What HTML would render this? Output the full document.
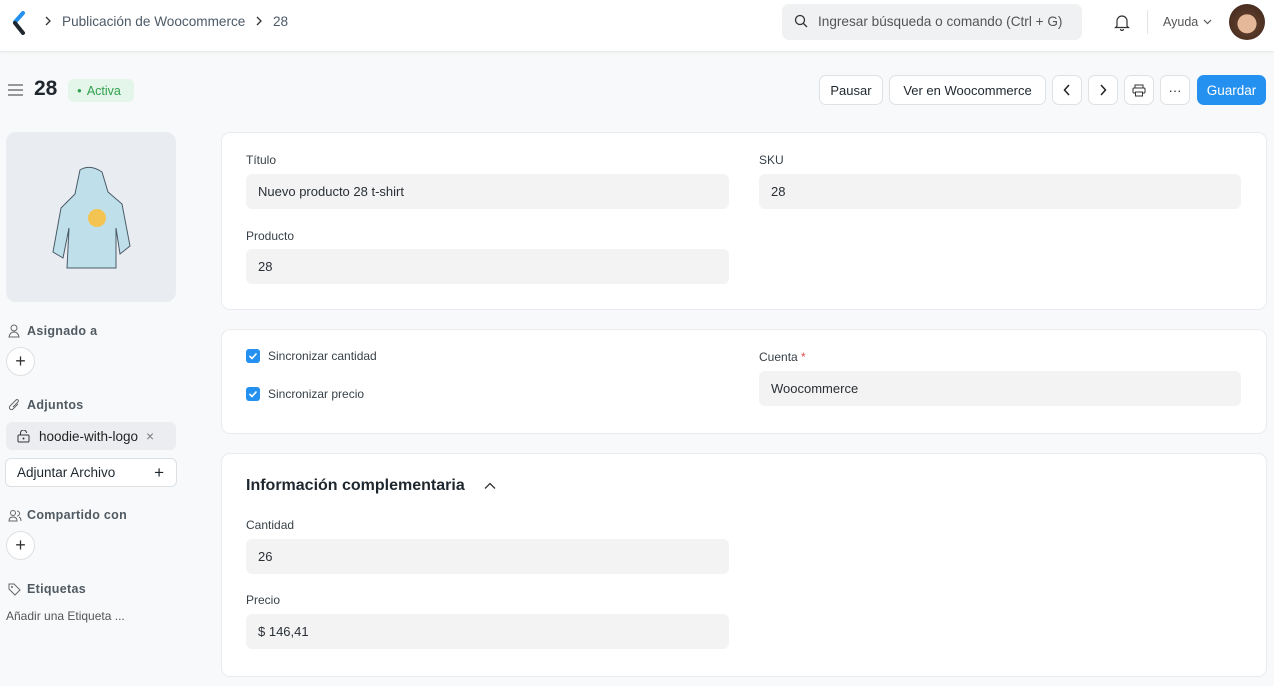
<!DOCTYPE html>
<html><head><meta charset="utf-8"><style>
*{box-sizing:border-box;margin:0;padding:0}
body{width:1274px;height:686px;overflow:hidden;background:#f8f9fa;font-family:"Liberation Sans",sans-serif;color:#1f272e;position:relative;font-size:13px}
.hdr{position:absolute;left:0;top:0;width:1274px;height:52px;background:#fff;border-bottom:1px solid #e8eaed;box-shadow:0 1px 3px rgba(0,0,0,.04)}
.abs{position:absolute}
.btn{position:absolute;top:75px;height:30px;border:1px solid #dfe2e5;border-radius:7px;background:#fff;font-size:13px;display:flex;align-items:center;justify-content:center;color:#1f272e}
.card{position:absolute;left:221px;width:1046px;background:#fff;border:1px solid #e9ebee;border-radius:9px}
.lbl{position:absolute;font-size:12px;color:#384148}
.inp{position:absolute;height:35px;background:#f3f3f4;border-radius:6px;font-size:13px;padding-left:12px;display:flex;align-items:center;color:#2a3036}
.side{position:absolute;left:27px;font-size:12.5px;color:#505a62;font-weight:bold;letter-spacing:.3px}
.circ{position:absolute;left:6px;width:29px;height:29px;border:1px solid #dde0e3;border-radius:50%;background:#fff;display:flex;align-items:center;justify-content:center;font-size:18px;color:#333}
.cb{position:absolute;left:246px;width:14px;height:14px;background:#2490ef;border-radius:3px}
</style></head><body>
<div class="hdr">
<svg class="abs" style="left:12px;top:11px" width="14" height="24" viewBox="0 0 14 24"><path d="M11 2L3 11" stroke="#2490ef" stroke-width="4" stroke-linecap="round"/><path d="M3 12L11 22" stroke="#1f272e" stroke-width="4" stroke-linecap="round"/></svg>
<svg class="abs" style="left:44px;top:16px" width="8" height="10"><path d="M2 1l4 4-4 4" fill="none" stroke="#333" stroke-width="1.3"/></svg>
<div class="abs" style="left:62px;top:14px;font-size:13.6px;color:#4c5a67">Publicación de Woocommerce</div>
<svg class="abs" style="left:255px;top:16px" width="8" height="10"><path d="M2 1l4 4-4 4" fill="none" stroke="#333" stroke-width="1.3"/></svg>
<div class="abs" style="left:273px;top:14px;font-size:13.6px;color:#4c5a67">28</div>
<div class="abs" style="left:782px;top:4px;width:300px;height:36px;background:#f0f1f2;border-radius:7px"></div>
<svg class="abs" style="left:794px;top:14px" width="14" height="14" viewBox="0 0 14 14"><circle cx="6" cy="6" r="4.5" fill="none" stroke="#333" stroke-width="1.3"/><path d="M9.5 9.5L13 13" stroke="#333" stroke-width="1.3"/></svg>
<div class="abs" style="left:818px;top:14px;font-size:13.6px;color:#555">Ingresar búsqueda o comando (Ctrl + G)</div>
<svg class="abs" style="left:1114px;top:13px" width="16" height="18" viewBox="0 0 16 18"><path d="M3 13V8a5 5 0 0110 0v5l1.5 1.5h-13z" fill="none" stroke="#333" stroke-width="1.2"/><path d="M6.5 16a1.5 1.5 0 003 0" fill="none" stroke="#333" stroke-width="1.2"/></svg>
<div class="abs" style="left:1147px;top:10px;width:1px;height:24px;background:#e2e4e7"></div>
<div class="abs" style="left:1163px;top:15px;font-size:12.5px;color:#555">Ayuda</div>
<svg class="abs" style="left:1203px;top:19px" width="9" height="6"><path d="M1 1l3.5 3.5L8 1" fill="none" stroke="#555" stroke-width="1.2"/></svg>
<div class="abs" style="left:1229px;top:4px;width:36px;height:36px;border-radius:50%;background:radial-gradient(circle at 50% 55%,#e6b89a 0 35%,#5a3a2a 36%,#3b2418 100%)"></div>
</div>
<svg class="abs" style="left:8px;top:83px" width="16" height="14"><path d="M0 2h15M0 7h15M0 12h15" stroke="#777" stroke-width="1.5"/></svg>
<div class="abs" style="left:34px;top:77px;font-size:21px;font-weight:bold">28</div>
<div class="abs" style="left:68px;top:79px;width:66px;height:23px;background:#e4f5e9;border-radius:6px;font-size:12.5px;color:#30a14e;display:flex;align-items:center;padding-left:9px"><span style="font-size:8px;margin-right:5px">●</span>Activa</div>
<div class="btn" style="left:819px;width:64px">Pausar</div>
<div class="btn" style="left:889px;width:157px">Ver en Woocommerce</div>
<div class="btn" style="left:1052px;width:30px"><svg width="8" height="12"><path d="M6 1L1.5 6 6 11" fill="none" stroke="#222" stroke-width="1.5"/></svg></div>
<div class="btn" style="left:1088px;width:30px"><svg width="8" height="12"><path d="M2 1l4.5 5L2 11" fill="none" stroke="#222" stroke-width="1.5"/></svg></div>
<div class="btn" style="left:1124px;width:30px"><svg width="14" height="13"><rect x="3" y="1" width="8" height="3" fill="none" stroke="#333"/><rect x="1" y="4" width="12" height="5" rx="1" fill="none" stroke="#333"/><rect x="3.5" y="8" width="7" height="4" fill="#fff" stroke="#333"/></svg></div>
<div class="btn" style="left:1160px;width:30px">···</div>
<div class="btn" style="left:1197px;width:69px;background:#2490ef;border-color:#2490ef;color:#fff;font-size:13.5px">Guardar</div>

<div class="abs" style="left:6px;top:132px;width:170px;height:170px;background:#e9edf1;border-radius:10px"></div>
<svg class="abs" style="left:45px;top:166px" width="92" height="104" viewBox="0 0 92 104"><path d="M35 4q10-6 22 2l6 20 14 12 8 42-10 8-4-26 0 40H22l2-40-6 30-10-6 8-44 14-14z" fill="#bfe0ea" stroke="#4a5a66" stroke-width="1"/><circle cx="52" cy="52" r="9" fill="#f3c452"/></svg>
<svg class="abs" style="left:8px;top:324px" width="14" height="14"><circle cx="6" cy="4" r="3" fill="none" stroke="#666"/><path d="M1 13q1-5 5-5t5 5z" fill="none" stroke="#666"/></svg>
<div class="side" style="top:324px">Asignado a</div>
<div class="circ" style="top:347px">+</div>
<svg class="abs" style="left:8px;top:399px" width="13" height="13"><path d="M10 5L5 10a2 2 0 01-3-3l6-6a1.3 1.3 0 012 2L5 8" fill="none" stroke="#666"/></svg>
<div class="side" style="top:398px">Adjuntos</div>
<div class="abs" style="left:6px;top:422px;width:170px;height:28px;background:#ebedf0;border-radius:6px;display:flex;align-items:center;padding-left:33px;font-size:13.5px;color:#222">hoodie-with-logo<span style="margin-left:8px;color:#777">×</span></div>
<svg class="abs" style="left:17px;top:430px" width="13" height="13"><rect x="1" y="5" width="11" height="7" rx="1" fill="none" stroke="#333"/><path d="M3.5 5V3a3 3 0 016 0" fill="none" stroke="#333"/><circle cx="6.5" cy="8.5" r="1" fill="#333"/></svg>
<div class="abs" style="left:5px;top:458px;width:172px;height:29px;border:1px solid #dde0e3;border-radius:6px;background:#fff;font-size:13.5px;display:flex;align-items:center;padding-left:11px;justify-content:space-between;padding-right:12px">Adjuntar Archivo<span style="font-size:17px">+</span></div>
<svg class="abs" style="left:8px;top:509px" width="14" height="13"><circle cx="5" cy="4" r="2.5" fill="none" stroke="#666"/><path d="M1 12q0-4 4-4t4 4z" fill="none" stroke="#666"/><path d="M9 2a2.5 2.5 0 010 5M11 8q2 1 2 4" fill="none" stroke="#666"/></svg>
<div class="side" style="top:508px">Compartido con</div>
<div class="circ" style="top:531px">+</div>
<svg class="abs" style="left:8px;top:583px" width="13" height="13"><path d="M1 1h5l6 6-5 5-6-6z" fill="none" stroke="#666"/><circle cx="4" cy="4" r="1" fill="#666"/></svg>
<div class="side" style="top:582px">Etiquetas</div>
<div class="abs" style="left:6px;top:609px;font-size:12px;color:#555">Añadir una Etiqueta ...</div>

<div class="card" style="top:132px;height:178px"></div>
<div class="lbl" style="left:246px;top:153px">Título</div>
<div class="inp" style="left:246px;top:174px;width:483px">Nuevo producto 28 t-shirt</div>
<div class="lbl" style="left:759px;top:153px">SKU</div>
<div class="inp" style="left:759px;top:174px;width:482px">28</div>
<div class="lbl" style="left:246px;top:229px">Producto</div>
<div class="inp" style="left:246px;top:249px;width:483px">28</div>

<div class="card" style="top:329px;height:105px"></div>
<div class="cb" style="top:349px"><svg width="14" height="14"><path d="M3.5 7l2.5 2.5 4.5-5" stroke="#fff" stroke-width="1.6" fill="none"/></svg></div>
<div class="lbl" style="left:268px;top:349px">Sincronizar cantidad</div>
<div class="cb" style="top:387px"><svg width="14" height="14"><path d="M3.5 7l2.5 2.5 4.5-5" stroke="#fff" stroke-width="1.6" fill="none"/></svg></div>
<div class="lbl" style="left:268px;top:387px">Sincronizar precio</div>
<div class="lbl" style="left:759px;top:350px">Cuenta <span style="color:#e24c4c">*</span></div>
<div class="inp" style="left:759px;top:371px;width:482px">Woocommerce</div>

<div class="card" style="top:453px;height:224px"></div>
<div class="abs" style="left:246px;top:477px;font-size:16px;font-weight:bold">Información complementaria</div>
<svg class="abs" style="left:484px;top:482px" width="12" height="8"><path d="M1 6.5l5-5 5 5" fill="none" stroke="#333" stroke-width="1.3"/></svg>
<div class="lbl" style="left:246px;top:518px">Cantidad</div>
<div class="inp" style="left:246px;top:539px;width:483px">26</div>
<div class="lbl" style="left:246px;top:593px">Precio</div>
<div class="inp" style="left:246px;top:614px;width:483px">$ 146,41</div>
</body></html>
